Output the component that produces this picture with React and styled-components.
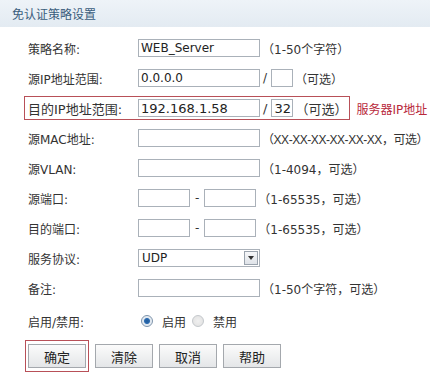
import React from "react";
import styled, { createGlobalStyle } from "styled-components";

const GlobalStyle = createGlobalStyle`
  html, body {
    margin: 0;
    padding: 0;
    background: #ffffff;
  }
  body {
    font-family: "DejaVu Sans", "Noto Sans CJK SC", sans-serif;
    font-size: 12px;
    color: #333;
  }
`;

const Page = styled.div`
  width: 430px;
  height: 374px;
  overflow: hidden;
  background: #fff;
`;

const Header = styled.div`
  height: 27px;
  display: flex;
  align-items: center;
  padding-left: 12px;
  background: linear-gradient(#eef3f8, #e3ebf2);
  color: #3a5d7c;
  font-size: 12px;
`;

const Form = styled.div`
  display: flex;
  flex-direction: column;
  padding: 6px 0 0 28px;
`;

const Row = styled.div`
  display: flex;
  align-items: center;
  height: ${(p) => p.h || 30}px;
`;

const Label = styled.span`
  width: 110px;
  flex-shrink: 0;
  white-space: nowrap;
`;

const Highlight = styled.div`
  display: flex;
  align-items: center;
  height: 22px;
  margin-left: -4px;
  padding: 0 2px 0 3px;
  border: 1px solid #b85058;
  font-size: 13px;
`;

const Input = styled.div`
  box-sizing: border-box;
  width: ${(p) => p.w || 122}px;
  height: 18px;
  border: 1px solid #aab1b9;
  background: #fff;
  padding-left: 2px;
  display: flex;
  align-items: center;
  font-size: ${(p) => (p.big ? 13 : 12)}px;
  color: #222;
  flex-shrink: 0;
`;

const Sep = styled.span`
  margin: 0 ${(p) => p.r || 4}px 0 ${(p) => p.l || 3}px;
`;

const Hint = styled.span`
  margin-left: 2px;
  white-space: nowrap;
  font-family: ${(p) =>
    p.narrow
      ? `"Liberation Sans", "Noto Sans CJK SC", sans-serif`
      : `"DejaVu Sans", "Noto Sans CJK SC", sans-serif`};
  letter-spacing: ${(p) => (p.narrow ? "-0.45px" : "0")};
`;

const Note = styled.span`
  margin-left: 6px;
  color: #b8283a;
  white-space: nowrap;
`;

const Select = styled.div`
  box-sizing: border-box;
  width: 122px;
  height: 18px;
  border: 1px solid #aab1b9;
  display: flex;
  align-items: center;
  justify-content: space-between;
  padding: 0 1px 0 3px;
  color: #222;
`;

const Arrow = styled.span`
  box-sizing: border-box;
  width: 14px;
  height: 14px;
  border: 1px solid #9aa3ad;
  background: linear-gradient(#f6f7f9, #dfe3e8);
  display: flex;
  align-items: center;
  justify-content: center;
  &::after {
    content: "";
    border-left: 3px solid transparent;
    border-right: 3px solid transparent;
    border-top: 4px solid #333;
  }
`;

const Radio = styled.span`
  box-sizing: border-box;
  width: 12px;
  height: 12px;
  border-radius: 50%;
  margin: 0 9px 0 ${(p) => p.ml || 3}px;
  border: 1px solid ${(p) => (p.checked ? "#7d93ab" : "#c4c8cc")};
  background: ${(p) =>
    p.checked
      ? "radial-gradient(circle, #1f5a9a 0, #2c6bb0 2.5px, #dde6ef 3.5px, #f4f6f8 6px)"
      : "radial-gradient(circle, #f0f0f0 0, #e2e2e2 6px)"};
`;

const Buttons = styled.div`
  display: flex;
  align-items: center;
  gap: 6px;
  margin: 1px 0 0 -3px;
`;

const Marked = styled.div`
  border: 1px solid #b85058;
  padding: 3px 2px;
`;

const Button = styled.div`
  box-sizing: border-box;
  width: 58px;
  height: 24px;
  border: 1px solid #a4a8ad;
  background: linear-gradient(#fbfbfb, #e4e6e8);
  display: flex;
  align-items: center;
  justify-content: center;
  font-size: 13px;
  color: #222;
`;

export default function App() {
  return (
    <Page>
      <GlobalStyle />
      <Header>免认证策略设置</Header>
      <Form>
        <Row>
          <Label>策略名称:</Label>
          <Input>WEB_Server</Input>
          <Hint>（1-50个字符）</Hint>
        </Row>
        <Row>
          <Label>源IP地址范围:</Label>
          <Input>0.0.0.0</Input>
          <Sep>/</Sep>
          <Input w={22} />
          <Hint>（可选）</Hint>
        </Row>
        <Row>
          <Highlight>
            <Label>目的IP地址范围:</Label>
            <Input big>192.168.1.58</Input>
            <Sep>/</Sep>
            <Input w={22} big>32</Input>
            <Hint>（可选）</Hint>
          </Highlight>
          <Note>服务器IP地址</Note>
        </Row>
        <Row>
          <Label>源MAC地址:</Label>
          <Input />
          <Hint narrow>（XX-XX-XX-XX-XX-XX，可选）</Hint>
        </Row>
        <Row>
          <Label>源VLAN:</Label>
          <Input />
          <Hint>（1-4094，可选）</Hint>
        </Row>
        <Row>
          <Label>源端口:</Label>
          <Input w={52} />
          <Sep l={5} r={5}>-</Sep>
          <Input w={52} />
          <Hint>（1-65535，可选）</Hint>
        </Row>
        <Row>
          <Label>目的端口:</Label>
          <Input w={52} />
          <Sep l={5} r={5}>-</Sep>
          <Input w={52} />
          <Hint>（1-65535，可选）</Hint>
        </Row>
        <Row>
          <Label>服务协议:</Label>
          <Select>
            UDP
            <Arrow />
          </Select>
        </Row>
        <Row>
          <Label>备注:</Label>
          <Input />
          <Hint>（1-50个字符，可选）</Hint>
        </Row>
        <Row h={36}>
          <Label>启用/禁用:</Label>
          <Radio checked />
          启用
          <Radio ml={6} />
          禁用
        </Row>
        <Buttons>
          <Marked>
            <Button>确定</Button>
          </Marked>
          <Button>清除</Button>
          <Button>取消</Button>
          <Button>帮助</Button>
        </Buttons>
      </Form>
    </Page>
  );
}
